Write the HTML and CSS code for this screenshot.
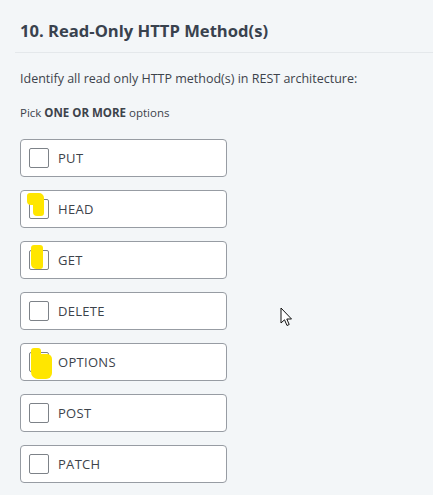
FILE: index.html
```html
<!DOCTYPE html>
<html>
<head>
<meta charset="utf-8">
<link rel="stylesheet" href="styles.css">
</head>
<body>
<div class="page">
  <div class="header">
    <h1 class="title">10. Read-Only HTTP Method(s)</h1>
  </div>
  <p class="question">Identify all read only HTTP method(s) in REST architecture:</p>
  <p class="hint">Pick <b>ONE OR MORE</b> options</p>
  <div class="options">
    <label class="option"><span class="box"></span><span class="label">PUT</span></label>
    <label class="option"><span class="box"></span><span class="label">HEAD</span><span class="mark mark-head"><i class="m1"></i><i class="m2"></i></span></label>
    <label class="option"><span class="box"></span><span class="label">GET</span><span class="mark mark-get"></span></label>
    <label class="option"><span class="box"></span><span class="label">DELETE</span></label>
    <label class="option"><span class="box"></span><span class="label">OPTIONS</span><span class="mark mark-opt"><i class="m1"></i><i class="m2"></i></span></label>
    <label class="option"><span class="box"></span><span class="label">POST</span></label>
    <label class="option"><span class="box"></span><span class="label">PATCH</span></label>
  </div>
  <svg class="cursor" width="14" height="20" viewBox="0 0 14 20">
    <path d="M1 1 L1 16 L4.5 12.8 L7 18.5 L9.2 17.5 L6.8 12 L11.5 12 Z" fill="#fff" stroke="#111" stroke-width="1" stroke-linejoin="miter"/>
  </svg>
</div>
</body>
</html>
```

FILE: styles.css
```css
html, body {
  margin: 0;
  padding: 0;
  background: #f3f6f8;
}
.page {
  position: relative;
  width: 433px;
  height: 495px;
  overflow: hidden;
  font-family: "Open Sans", "Liberation Sans", sans-serif;
  color: #39424e;
}
.header {
  margin-left: 15px;
  padding: 21px 0 12px 5px;
  border-bottom: 1px solid #e4e8eb;
}
.title {
  margin: 0;
  font-size: 16.6px;
  line-height: 19px;
  font-weight: 700;
  color: #39424e;
}
.question {
  margin: 17px 0 0 20px;
  font-size: 12.5px;
  line-height: 18px;
  color: #3d434b;
}
.hint {
  margin: 17px 0 0 20px;
  font-size: 11.5px;
  line-height: 16px;
  color: #3d434b;
}
.hint b {
  font-weight: 700;
}
.options {
  margin: 18px 0 0 20px;
  width: 207px;
  display: flex;
  flex-direction: column;
  gap: 13px;
}
.option {
  position: relative;
  display: flex;
  align-items: center;
  box-sizing: border-box;
  height: 38px;
  padding-left: 8px;
  background: #fff;
  border: 1px solid #979ca3;
  border-radius: 4px;
}
.box {
  box-sizing: border-box;
  width: 20px;
  height: 20px;
  border: 1px solid #7d8288;
  border-radius: 2px;
  background: #fff;
}
.label {
  margin-left: 9px;
  font-size: 13px;
  letter-spacing: 0.3px;
  color: #3d434b;
}
.mark {
  position: absolute;
  background: transparent;
}
.mark i {
  position: absolute;
  display: block;
  background: #ffe600;
}
.mark-head {
  left: 6px;
  top: 2px;
  width: 17px;
  height: 23px;
}
.mark-head .m1 {
  left: 0; top: 0; width: 17px; height: 12px;
  border-radius: 3px 5px 2px 4px;
}
.mark-head .m2 {
  left: 6px; top: 8px; width: 11px; height: 15px;
  border-radius: 1px 2px 3px 4px;
}
.mark-get {
  left: 10px;
  top: 3px;
  width: 12px;
  height: 24px;
  background: #ffe600;
  border-radius: 3px 3px 3px 5px;
}
.mark-opt {
  left: 10px;
  top: 4px;
  width: 21px;
  height: 31px;
}
.mark-opt .m1 {
  left: 0; top: 0; width: 10px; height: 10px;
  border-radius: 3px 3px 0 0;
}
.mark-opt .m2 {
  left: 0; top: 6px; width: 21px; height: 25px;
  border-radius: 2px 5px 6px 7px;
}
.cursor {
  position: absolute;
  left: 280px;
  top: 307px;
}
```
